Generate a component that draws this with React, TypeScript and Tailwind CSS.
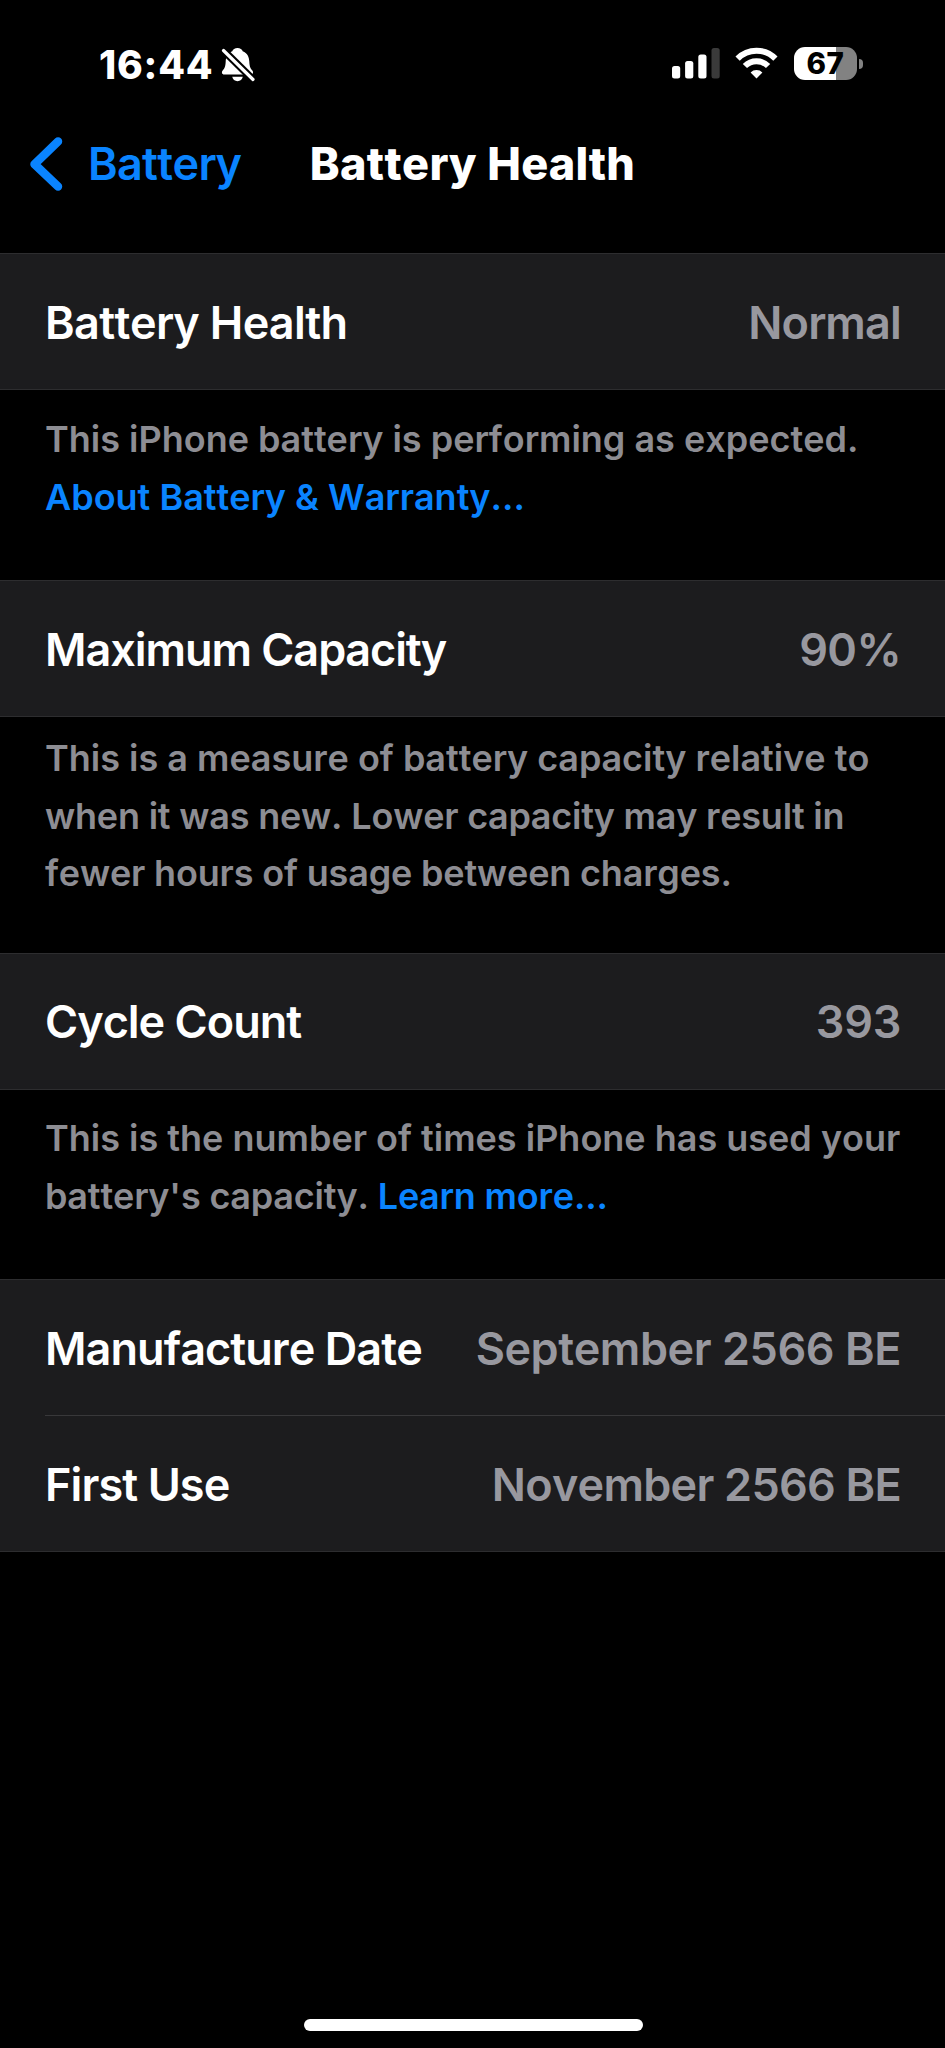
import React from 'react';

interface RowProps {
  label: string;
  value: string;
  className?: string;
  labelClass?: string;
  valueClass?: string;
}

const Row = ({ label, value, className = 'pt-px', labelClass = '', valueClass = '' }: RowProps) => (
  <div
    className={`flex h-[135px] items-center justify-between pr-[44px] text-[45px] leading-none font-semibold whitespace-nowrap ${className}`}
  >
    <span className={`text-white ${labelClass}`}>{label}</span>
    <span className={`text-[#98989f] ${valueClass}`}>{value}</span>
  </div>
);

const Group = ({ children }: { children: React.ReactNode }) => (
  <section className="border-y border-[#2d2d2f] bg-[#1c1c1e] pl-[45px]">{children}</section>
);

const SignalIcon = () => (
  <svg width="48" height="32" viewBox="0 0 48 32" fill="#fff">
    <rect x="0" y="19" width="8.2" height="12.5" rx="2.5" />
    <rect x="13.1" y="14" width="8.2" height="17.5" rx="2.5" />
    <rect x="26.3" y="7.5" width="8.2" height="24" rx="2.5" />
    <rect x="39.5" y="1" width="8.2" height="30.5" rx="2.5" fill="#3a3a3a" />
  </svg>
);

const WifiIcon = () => (
  <svg width="43" height="32" viewBox="0 0 43 32" fill="none" stroke="#fff" strokeWidth="6">
    <path d="M2.6 11.6a26.6 26.6 0 0 1 37.8 0" />
    <path d="M9.9 19a16.4 16.4 0 0 1 23.2 0" />
    <path d="M21.5 31.4l-5.9-6a8.4 8.4 0 0 1 11.8 0z" fill="#fff" stroke="none" />
  </svg>
);

const BellOffIcon = () => (
  <svg width="34" height="35" viewBox="0 0 34 35">
    <g fill="#fff">
      <path d="M16.5 1c-2.6 0-4.8 1.4-5.2 3.2-4.6 1.7-6.4 5.8-6.6 10.3-.2 5.3-1.3 7.1-3 9-1.3 1.5-1 4 1.6 4h26.4c2.6 0 2.9-2.5 1.6-4-1.7-1.9-2.8-3.7-3-9-.2-4.5-2-8.6-6.6-10.3-.4-1.8-2.6-3.2-5.2-3.2z" />
      <path d="M11.2 29.8h10.6c-.5 2.6-2.6 4.4-5.3 4.4s-4.8-1.8-5.3-4.4z" />
    </g>
    <path d="M2.5 3.5l30 29.5" stroke="#000" strokeWidth="7.5" />
    <path d="M2.5 3.5l29.5 29" stroke="#fff" strokeWidth="3.2" strokeLinecap="round" />
  </svg>
);

const BatteryIcon = () => (
  <div className="flex items-center gap-[2px]">
    <div className="flex h-[33px] w-[63px] items-center justify-center rounded-[11px] bg-[linear-gradient(to_right,#fff_67%,#828282_67%)]">
      <span className="text-[29.5px] leading-none font-extrabold tracking-[0.5px] text-black">67</span>
    </div>
    <div className="h-[10px] w-[4px] rounded-r-full bg-[#828282]" />
  </div>
);

const App = () => {
  return (
    <div className="flex h-[2048px] w-[945px] flex-col overflow-hidden bg-black font-[Inter,sans-serif] [font-kerning:none]">
      {/* Status bar */}
      <div className="flex h-[128px] items-start justify-between pt-[47px] pr-[82px] pl-[99px]">
        <div className="flex items-start gap-[10px]">
          <span className="w-[112px] pt-px text-[39px] leading-[34px] font-extrabold tracking-[0.8px] text-white">16:44</span>
          <BellOffIcon />
        </div>
        <div className="flex items-start">
          <SignalIcon />
          <div className="mr-[16px] ml-[15px]">
            <WifiIcon />
          </div>
          <BatteryIcon />
        </div>
      </div>

      {/* Navigation bar */}
      <header className="grid h-[125px] grid-cols-[300px_345px_300px] items-start text-[45px] leading-[72px]">
        <button className="flex items-center pl-[28px] text-left font-semibold tracking-[-0.7px] text-[#0a84ff]">
          <svg width="36" height="56" viewBox="0 0 36 56" fill="none" className="mr-[24px]">
            <path d="M30 5.5L6.5 28.2L30 50.5" stroke="#0a84ff" strokeWidth="8.5" strokeLinecap="round" strokeLinejoin="round" />
          </svg>
          Battery
        </button>
        <h1 className="text-center font-extrabold tracking-[0.4px] whitespace-nowrap text-white">Battery Health</h1>
      </header>

      <main className="text-[36px] leading-[57.5px] font-semibold whitespace-nowrap text-[#8d8d93]">
        <Group>
          <Row label="Battery Health" value="Normal" labelClass="tracking-[-0.6px]" valueClass="tracking-[-0.8px]" />
        </Group>
        <div className="h-[190px] pt-[21px] pl-[45px]">
          <p>This iPhone battery is performing as expected.</p>
          <a className="text-[#0a84ff]">About Battery &amp; Warranty...</a>
        </div>

        <Group>
          <Row label="Maximum Capacity" value="90%" labelClass="tracking-[-1.05px]" valueClass="tracking-[-0.6px]" />
        </Group>
        <div className="h-[236px] pt-[13px] pl-[45px]">
          <p>This is a measure of battery capacity relative to</p>
          <p className="tracking-[-0.2px]">when it was new. Lower capacity may result in</p>
          <p className="tracking-[-0.17px]">fewer hours of usage between charges.</p>
        </div>

        <Group>
          <Row label="Cycle Count" value="393" className="pb-px" labelClass="tracking-[-1px]" valueClass="tracking-[-0.3px]" />
        </Group>
        <div className="h-[189px] pt-[20px] pl-[45px]">
          <p>This is the number of times iPhone has used your</p>
          <p className="tracking-[-0.14px]">
            battery's capacity. <a className="text-[#0a84ff]">Learn more...</a>
          </p>
        </div>

        <Group>
          <Row label="Manufacture Date" value="September 2566 BE" labelClass="tracking-[-0.95px]" valueClass="tracking-[-0.45px]" />
          <div className="h-px bg-[#38383a]" />
          <Row label="First Use" value="November 2566 BE" labelClass="tracking-[-0.9px]" valueClass="tracking-[-0.75px]" />
        </Group>
      </main>

      {/* Home indicator */}
      <div className="mt-auto mb-[17px] ml-px h-[12px] w-[339px] self-center rounded-full bg-white" />
    </div>
  );
};

export default App;
